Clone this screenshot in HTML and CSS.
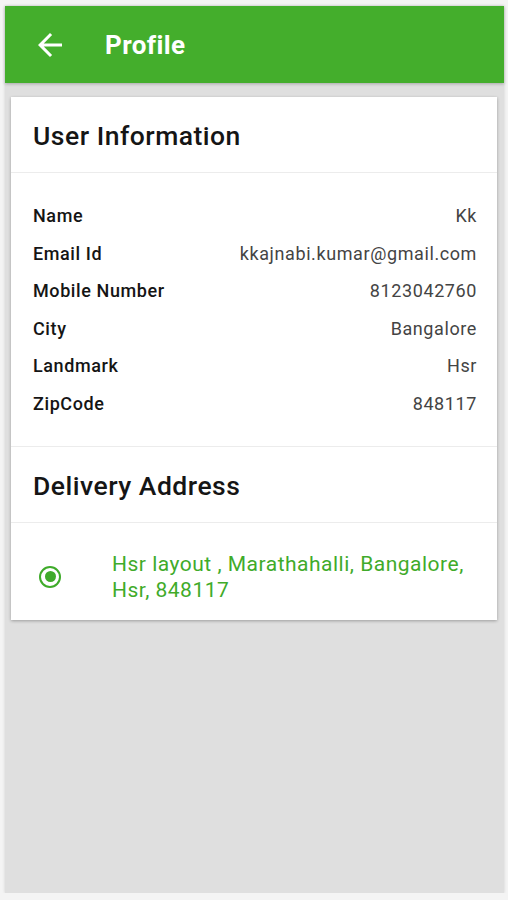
FILE: index.html
```html
<!DOCTYPE html>
<html>
<head>
    <meta charset="UTF-8">
    <title>Profile</title>
    <link rel="stylesheet" href="styles.css">
</head>
<body>
    <div class="screen">
        <header>
            <svg class="back" viewBox="0 0 24 24" width="36" height="36"><path d="M20 11H7.83l5.59-5.59L12 4l-8 8 8 8 1.41-1.41L7.83 13H20v-2z" fill="#fff"/></svg>
            <h1>Profile</h1>
        </header>
        <div class="card">
            <div class="title">User Information</div>
            <div class="info">
                <div class="row"><span class="label">Name</span><span class="value">Kk</span></div>
                <div class="row"><span class="label">Email Id</span><span class="value">kkajnabi.kumar@gmail.com</span></div>
                <div class="row"><span class="label">Mobile Number</span><span class="value">8123042760</span></div>
                <div class="row"><span class="label">City</span><span class="value">Bangalore</span></div>
                <div class="row"><span class="label">Landmark</span><span class="value">Hsr</span></div>
                <div class="row"><span class="label">ZipCode</span><span class="value">848117</span></div>
            </div>
            <div class="title">Delivery Address</div>
            <div class="address">
                <span class="radio"><span class="dot"></span></span>
                <p>Hsr layout , Marathahalli, Bangalore, Hsr, 848117</p>
            </div>
        </div>
    </div>
</body>
</html>
```

FILE: styles.css
```css
*{
    margin: 0;
    padding: 0;
    box-sizing: border-box;
}
body{
    background-color: #f4f4f4;
    font-family: Roboto, "Liberation Sans", sans-serif;
}
.screen{
    margin: 6px 4px 0 5px;
    height: 887px;
    background-color: #dfdfdf;
    box-shadow: 0 0 3px rgba(0, 0, 0, 0.15);
}
header{
    height: 77px;
    background-color: #44ae2c;
    display: flex;
    align-items: center;
    padding-left: 27px;
    box-shadow: 0 1px 3px rgba(0, 0, 0, 0.25);
}
header h1{
    color: white;
    font-size: 26px;
    font-weight: bold;
    letter-spacing: 0.4px;
    margin-left: 37px;
}
.card{
    margin: 14px 7px 0 6px;
    background-color: white;
    box-shadow: 0 1px 3px rgba(0, 0, 0, 0.3);
}
.title{
    height: 76px;
    line-height: 78px;
    padding-left: 22px;
    font-size: 26.5px;
    font-weight: 500;
    letter-spacing: 0.5px;
    color: #151515;
    border-bottom: 1px solid #ececec;
}
.info{
    padding: 24px 20px 23px 22px;
    border-bottom: 1px solid #ececec;
}
.row{
    display: flex;
    justify-content: space-between;
    line-height: 37.6px;
    font-size: 18px;
    letter-spacing: 0.6px;
}
.label{
    font-weight: 500;
    color: #151515;
}
.value{
    color: #444;
}
.address{
    display: flex;
    align-items: center;
    padding: 28px 14px 17px 28px;
}
.radio{
    width: 22px;
    height: 22px;
    border: 2.5px solid #3fab2a;
    border-radius: 50%;
    display: flex;
    align-items: center;
    justify-content: center;
    flex-shrink: 0;
}
.dot{
    width: 11px;
    height: 11px;
    border-radius: 50%;
    background-color: #3fab2a;
}
.address p{
    margin-left: 51px;
    color: #3fab2a;
    font-size: 21px;
    letter-spacing: 0.5px;
    line-height: 26px;
}
```
